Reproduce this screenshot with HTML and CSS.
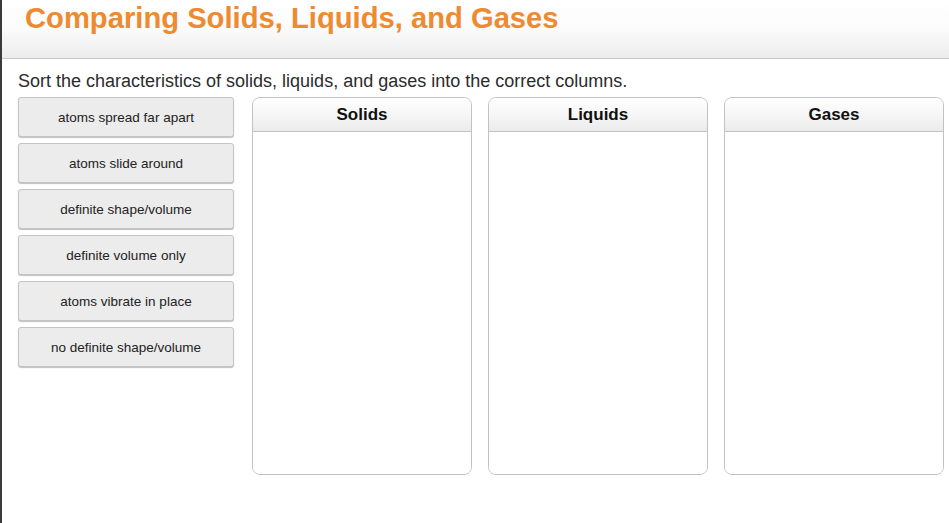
FILE: index.html
```html
<!DOCTYPE html>
<html>
<head>
<meta charset="utf-8">
<link rel="stylesheet" href="styles.css">
</head>
<body>
<div class="page">
  <header class="header">
    <h1 class="title">Comparing Solids, Liquids, and Gases</h1>
  </header>
  <main class="content">
    <p class="prompt">Sort the characteristics of solids, liquids, and gases into the correct columns.</p>
    <div class="board">
      <div class="pool">
        <div class="card">atoms spread far apart</div>
        <div class="card">atoms slide around</div>
        <div class="card">definite shape/volume</div>
        <div class="card">definite volume only</div>
        <div class="card">atoms vibrate in place</div>
        <div class="card">no definite shape/volume</div>
      </div>
      <div class="bins">
        <div class="bin"><div class="bin-head">Solids</div><div class="bin-body"></div></div>
        <div class="bin"><div class="bin-head">Liquids</div><div class="bin-body"></div></div>
        <div class="bin"><div class="bin-head">Gases</div><div class="bin-body"></div></div>
      </div>
    </div>
  </main>
</div>
</body>
</html>
```

FILE: styles.css
```css
html, body {
  margin: 0;
  padding: 0;
  background: #fff;
}
body {
  font-family: "Liberation Sans", Arial, sans-serif;
  color: #222;
}
.page {
  width: 949px;
  height: 523px;
  border-left: 2px solid #3a3a3a;
  box-sizing: border-box;
  overflow: hidden;
}
.header {
  height: 59px;
  box-sizing: border-box;
  border-bottom: 1px solid #c8c8c8;
  background: linear-gradient(to bottom, #ffffff 0%, #fbfbfb 50%, #ececec 100%);
  padding-left: 23px;
}
.title {
  margin: 0;
  padding-top: 3px;
  font-size: 29.2px;
  line-height: 30px;
  font-weight: bold;
  color: #ee8a30;
}
.content {
  padding: 0 0 0 16px;
}
.prompt {
  margin: 0;
  padding-top: 12px;
  font-size: 18px;
  line-height: 20px;
  color: #2b2b2b;
}
.board {
  display: flex;
  align-items: flex-start;
  gap: 18px;
  margin-top: 6px;
}
.pool {
  width: 216px;
  flex: none;
  display: flex;
  flex-direction: column;
  gap: 6px;
}
.card {
  height: 40px;
  box-sizing: border-box;
  border: 1px solid #c4c4c4;
  border-radius: 3px;
  background: #ececec;
  box-shadow: 0 1px 1px rgba(0,0,0,0.25);
  display: flex;
  align-items: center;
  justify-content: center;
  font-size: 13.5px;
  color: #222;
}
.bins {
  display: flex;
  gap: 16px;
}
.bin {
  width: 220px;
  flex: none;
  height: 378px;
  box-sizing: border-box;
  border: 1px solid #c2c2c2;
  border-radius: 8px;
  display: flex;
  flex-direction: column;
  overflow: hidden;
}
.bin-head {
  height: 34px;
  box-sizing: border-box;
  border-bottom: 1px solid #c2c2c2;
  background: linear-gradient(to bottom, #ffffff 0%, #f6f6f6 50%, #ebebeb 100%);
  display: flex;
  align-items: center;
  justify-content: center;
  font-size: 17px;
  font-weight: bold;
  color: #111;
}
.bin-body {
  flex: 1;
  background: #fff;
}
```
